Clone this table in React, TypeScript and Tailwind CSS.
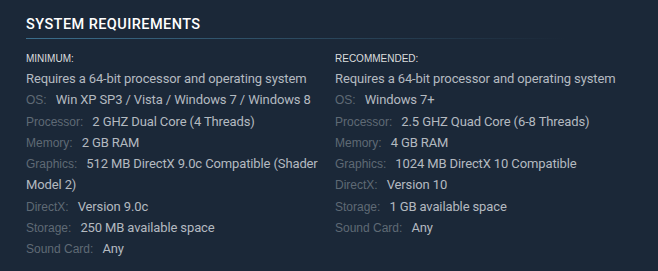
import React from 'react';

type Req = { label?: string; value: string };

const minimum: Req[] = [
  { value: 'Requires a 64-bit processor and operating system' },
  { label: 'OS:', value: 'Win XP SP3 / Vista / Windows 7 / Windows 8' },
  { label: 'Processor:', value: '2 GHZ Dual Core (4 Threads)' },
  { label: 'Memory:', value: '2 GB RAM' },
  { label: 'Graphics:', value: '512 MB DirectX 9.0c Compatible (Shader Model 2)' },
  { label: 'DirectX:', value: 'Version 9.0c' },
  { label: 'Storage:', value: '250 MB available space' },
  { label: 'Sound Card:', value: 'Any' },
];

const recommended: Req[] = [
  { value: 'Requires a 64-bit processor and operating system' },
  { label: 'OS:', value: 'Windows 7+' },
  { label: 'Processor:', value: '2.5 GHZ Quad Core (6-8 Threads)' },
  { label: 'Memory:', value: '4 GB RAM' },
  { label: 'Graphics:', value: '1024 MB DirectX 10 Compatible' },
  { label: 'DirectX:', value: 'Version 10' },
  { label: 'Storage:', value: '1 GB available space' },
  { label: 'Sound Card:', value: 'Any' },
];

const ReqColumn = ({ title, items }: { title: string; items: Req[] }) => (
  <div className="w-[309px] shrink-0 pr-[10px]">
    <div className="text-[10px] leading-[14px] uppercase text-[#dcdedf] font-['Liberation_Sans',Arial,sans-serif] mb-[2px]">
      {title}
    </div>
    <ul>
      {items.map((item, i) => (
        <li
          key={i}
          className="text-[13px] leading-[21.3px] tracking-[-0.12px] text-[#b4bac0] font-['Roboto','Noto_Sans',sans-serif]"
        >
          {item.label && (
            <span className="text-[12px] leading-[12px] tracking-normal text-[#5f6a75] font-['Liberation_Sans',Arial,sans-serif] mr-[9px]">
              {item.label}
            </span>
          )}
          {item.value}
        </li>
      ))}
    </ul>
  </div>
);

export default function App() {
  return (
    <div className="w-[658px] h-[271px] bg-[#1b2838] px-[26px] pt-[14px]">
      <h2 className="text-[14.5px] leading-[22px] uppercase text-white font-medium tracking-[0.03em] font-['Roboto','Noto_Sans',sans-serif]">
        System Requirements
      </h2>
      <div className="h-px w-[540px] mt-[2px] bg-gradient-to-r from-[#3b6e8c] via-[#2c4a60] to-transparent" />
      <div className="flex mt-[13px]">
        <ReqColumn title="Minimum:" items={minimum} />
        <ReqColumn title="Recommended:" items={recommended} />
      </div>
    </div>
  );
}
